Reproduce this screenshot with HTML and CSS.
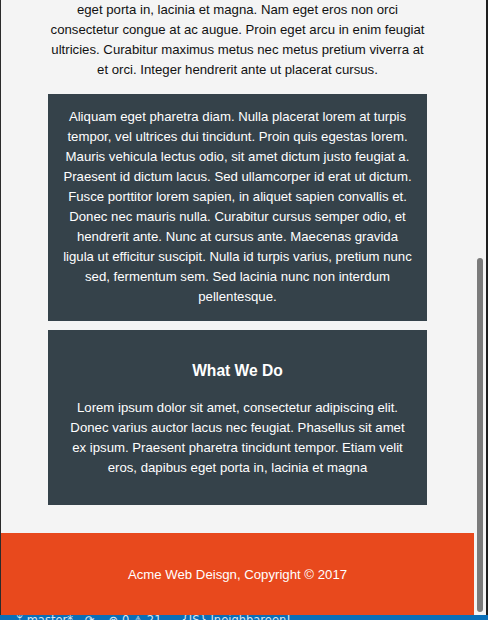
FILE: index.html
```html
<!DOCTYPE html>
<html lang="en">
<head>
<meta charset="utf-8">
<title>Acme Web Design | Services</title>
<link rel="stylesheet" href="styles.css">
</head>
<body>
<div class="desktop">
  <div class="workarea">
    <div class="edge-left"></div>
    <div class="viewport">
      <div class="container">
        <p class="intro">eget porta in, lacinia et magna. Nam eget eros non orci consectetur congue at ac augue. Proin eget arcu in enim feugiat ultricies. Curabitur maximus metus nec metus pretium viverra at et orci. Integer hendrerit ante ut placerat cursus.</p>
        <div class="dark">
          <p class="plain">Aliquam eget pharetra diam. Nulla placerat lorem at turpis tempor, vel ultrices dui tincidunt. Proin quis egestas lorem. Mauris vehicula lectus odio, sit amet dictum justo feugiat a. Praesent id dictum lacus. Sed ullamcorper id erat ut dictum. Fusce porttitor lorem sapien, in aliquet sapien convallis et. Donec nec mauris nulla. Curabitur cursus semper odio, et hendrerit ante. Nunc at cursus ante. Maecenas gravida ligula ut efficitur suscipit. Nulla id turpis varius, pretium nunc sed, fermentum sem. Sed lacinia nunc non interdum pellentesque.</p>
        </div>
        <div class="dark">
          <h3>What We Do</h3>
          <p>Lorem ipsum dolor sit amet, consectetur adipiscing elit. Donec varius auctor lacus nec feugiat. Phasellus sit amet ex ipsum. Praesent pharetra tincidunt tempor. Etiam velit eros, dapibus eget porta in, lacinia et magna</p>
        </div>
      </div>
      <footer class="footer">
        <p>Acme Web Deisgn, Copyright &copy; 2017</p>
      </footer>
    </div>
    <div class="scrollbar"><div class="thumb"></div></div>
    <div class="editor-strip"></div>
  </div>
  <div class="statusbar">
    <span class="status-item branch">&#5848; master*</span>
    <span class="status-item sync">&#10227;</span>
    <span class="status-item problems">&#8855; 0 &#9888; 21</span>
    <span class="status-item lint">{JS} Ineighbareen!</span>
  </div>
</div>
</body>
</html>
```

FILE: styles.css
```css
html, body {
  margin: 0;
  padding: 0;
  height: 620px;
  overflow: hidden;
  background: #1e1e1e;
}

.desktop {
  display: flex;
  flex-direction: column;
  height: 620px;
}

.workarea {
  display: flex;
  height: 615px;
}

.edge-left {
  width: 1px;
  background: #2b2b2b;
}

.viewport {
  width: 473px;
  height: 615px;
  overflow: hidden;
  background: #f4f4f4;
  font-family: "Liberation Sans", Arial, Helvetica, sans-serif;
  font-size: 13.2px;
  line-height: 20px;
  color: #111;
}

.container {
  width: 80%;
  margin: 0 auto;
  display: flow-root;
}

.intro {
  margin: 0 0 13.5px;
  text-align: center;
}

.dark {
  background: #35424a;
  color: #fff;
  padding: 13.5px;
  margin: 9px 0;
  text-align: center;
}

.dark h3 {
  font-size: 15.6px;
  line-height: 23.7px;
  margin: 15.8px 0;
  font-weight: bold;
}

.dark p {
  margin: 13.5px 0;
}

.dark p.plain {
  margin: 0;
}

.footer {
  margin-top: 19px;
  padding: 18px;
  background: #e8491d;
  color: #fff;
  text-align: center;
}

.footer p {
  margin: 14px 0 13px;
}

.scrollbar {
  width: 12px;
  background: #f4f4f4;
  display: flex;
  flex-direction: column;
  align-items: center;
  padding-top: 258px;
  box-sizing: border-box;
}

.thumb {
  width: 6px;
  height: 354px;
  border-radius: 3px;
  background: #7b7b7b;
}

.editor-strip {
  width: 2px;
  background: #1e1e1e;
}

.statusbar {
  height: 5px;
  overflow: hidden;
  background: #0a6fb8;
  color: #d8e6f3;
  font-family: "DejaVu Sans", sans-serif;
  font-size: 11.5px;
  line-height: 12px;
  display: flex;
  white-space: nowrap;
}

.status-item {
  display: block;
  margin-top: -1px;
}

.branch { margin-left: 16px; }
.sync { margin-left: 12px; }
.problems { margin-left: 14px; }
.lint { margin-left: 20px; }
```
